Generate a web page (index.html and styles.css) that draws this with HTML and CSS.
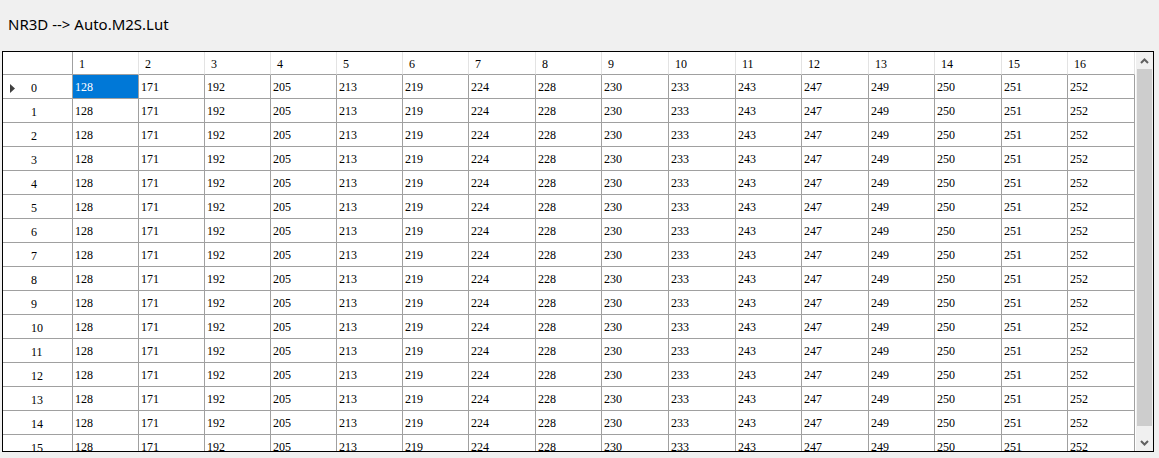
FILE: index.html
```html
<!DOCTYPE html>
<html>
<head>
<meta charset="utf-8">
<title>NR3D --> Auto.M2S.Lut</title>
<link rel="stylesheet" href="styles.css">
</head>
<body>
<div class="title">NR3D --&gt; Auto.M2S.Lut</div>
<div class="grid">
  <div class="viewport">
    <div class="row head">
      <div class="corner"></div>
      <div class="ch">1</div><div class="ch">2</div><div class="ch">3</div><div class="ch">4</div><div class="ch">5</div><div class="ch">6</div><div class="ch">7</div><div class="ch">8</div><div class="ch">9</div><div class="ch">10</div><div class="ch">11</div><div class="ch">12</div><div class="ch">13</div><div class="ch">14</div><div class="ch">15</div><div class="ch">16</div>
    </div>
    <div class="row">
      <div class="rh"><span class="glyph"><svg width="5" height="9" viewBox="0 0 5 9"><polygon points="0,0 5,4.5 0,9" fill="#404040"/></svg></span><span>0</span></div>
      <div class="c sel">128</div><div class="c">171</div><div class="c">192</div><div class="c">205</div><div class="c">213</div><div class="c">219</div><div class="c">224</div><div class="c">228</div><div class="c">230</div><div class="c">233</div><div class="c">243</div><div class="c">247</div><div class="c">249</div><div class="c">250</div><div class="c">251</div><div class="c">252</div>
    </div>
    <div class="row">
      <div class="rh"><span class="glyph"></span><span>1</span></div>
      <div class="c">128</div><div class="c">171</div><div class="c">192</div><div class="c">205</div><div class="c">213</div><div class="c">219</div><div class="c">224</div><div class="c">228</div><div class="c">230</div><div class="c">233</div><div class="c">243</div><div class="c">247</div><div class="c">249</div><div class="c">250</div><div class="c">251</div><div class="c">252</div>
    </div>
    <div class="row">
      <div class="rh"><span class="glyph"></span><span>2</span></div>
      <div class="c">128</div><div class="c">171</div><div class="c">192</div><div class="c">205</div><div class="c">213</div><div class="c">219</div><div class="c">224</div><div class="c">228</div><div class="c">230</div><div class="c">233</div><div class="c">243</div><div class="c">247</div><div class="c">249</div><div class="c">250</div><div class="c">251</div><div class="c">252</div>
    </div>
    <div class="row">
      <div class="rh"><span class="glyph"></span><span>3</span></div>
      <div class="c">128</div><div class="c">171</div><div class="c">192</div><div class="c">205</div><div class="c">213</div><div class="c">219</div><div class="c">224</div><div class="c">228</div><div class="c">230</div><div class="c">233</div><div class="c">243</div><div class="c">247</div><div class="c">249</div><div class="c">250</div><div class="c">251</div><div class="c">252</div>
    </div>
    <div class="row">
      <div class="rh"><span class="glyph"></span><span>4</span></div>
      <div class="c">128</div><div class="c">171</div><div class="c">192</div><div class="c">205</div><div class="c">213</div><div class="c">219</div><div class="c">224</div><div class="c">228</div><div class="c">230</div><div class="c">233</div><div class="c">243</div><div class="c">247</div><div class="c">249</div><div class="c">250</div><div class="c">251</div><div class="c">252</div>
    </div>
    <div class="row">
      <div class="rh"><span class="glyph"></span><span>5</span></div>
      <div class="c">128</div><div class="c">171</div><div class="c">192</div><div class="c">205</div><div class="c">213</div><div class="c">219</div><div class="c">224</div><div class="c">228</div><div class="c">230</div><div class="c">233</div><div class="c">243</div><div class="c">247</div><div class="c">249</div><div class="c">250</div><div class="c">251</div><div class="c">252</div>
    </div>
    <div class="row">
      <div class="rh"><span class="glyph"></span><span>6</span></div>
      <div class="c">128</div><div class="c">171</div><div class="c">192</div><div class="c">205</div><div class="c">213</div><div class="c">219</div><div class="c">224</div><div class="c">228</div><div class="c">230</div><div class="c">233</div><div class="c">243</div><div class="c">247</div><div class="c">249</div><div class="c">250</div><div class="c">251</div><div class="c">252</div>
    </div>
    <div class="row">
      <div class="rh"><span class="glyph"></span><span>7</span></div>
      <div class="c">128</div><div class="c">171</div><div class="c">192</div><div class="c">205</div><div class="c">213</div><div class="c">219</div><div class="c">224</div><div class="c">228</div><div class="c">230</div><div class="c">233</div><div class="c">243</div><div class="c">247</div><div class="c">249</div><div class="c">250</div><div class="c">251</div><div class="c">252</div>
    </div>
    <div class="row">
      <div class="rh"><span class="glyph"></span><span>8</span></div>
      <div class="c">128</div><div class="c">171</div><div class="c">192</div><div class="c">205</div><div class="c">213</div><div class="c">219</div><div class="c">224</div><div class="c">228</div><div class="c">230</div><div class="c">233</div><div class="c">243</div><div class="c">247</div><div class="c">249</div><div class="c">250</div><div class="c">251</div><div class="c">252</div>
    </div>
    <div class="row">
      <div class="rh"><span class="glyph"></span><span>9</span></div>
      <div class="c">128</div><div class="c">171</div><div class="c">192</div><div class="c">205</div><div class="c">213</div><div class="c">219</div><div class="c">224</div><div class="c">228</div><div class="c">230</div><div class="c">233</div><div class="c">243</div><div class="c">247</div><div class="c">249</div><div class="c">250</div><div class="c">251</div><div class="c">252</div>
    </div>
    <div class="row">
      <div class="rh"><span class="glyph"></span><span>10</span></div>
      <div class="c">128</div><div class="c">171</div><div class="c">192</div><div class="c">205</div><div class="c">213</div><div class="c">219</div><div class="c">224</div><div class="c">228</div><div class="c">230</div><div class="c">233</div><div class="c">243</div><div class="c">247</div><div class="c">249</div><div class="c">250</div><div class="c">251</div><div class="c">252</div>
    </div>
    <div class="row">
      <div class="rh"><span class="glyph"></span><span>11</span></div>
      <div class="c">128</div><div class="c">171</div><div class="c">192</div><div class="c">205</div><div class="c">213</div><div class="c">219</div><div class="c">224</div><div class="c">228</div><div class="c">230</div><div class="c">233</div><div class="c">243</div><div class="c">247</div><div class="c">249</div><div class="c">250</div><div class="c">251</div><div class="c">252</div>
    </div>
    <div class="row">
      <div class="rh"><span class="glyph"></span><span>12</span></div>
      <div class="c">128</div><div class="c">171</div><div class="c">192</div><div class="c">205</div><div class="c">213</div><div class="c">219</div><div class="c">224</div><div class="c">228</div><div class="c">230</div><div class="c">233</div><div class="c">243</div><div class="c">247</div><div class="c">249</div><div class="c">250</div><div class="c">251</div><div class="c">252</div>
    </div>
    <div class="row">
      <div class="rh"><span class="glyph"></span><span>13</span></div>
      <div class="c">128</div><div class="c">171</div><div class="c">192</div><div class="c">205</div><div class="c">213</div><div class="c">219</div><div class="c">224</div><div class="c">228</div><div class="c">230</div><div class="c">233</div><div class="c">243</div><div class="c">247</div><div class="c">249</div><div class="c">250</div><div class="c">251</div><div class="c">252</div>
    </div>
    <div class="row">
      <div class="rh"><span class="glyph"></span><span>14</span></div>
      <div class="c">128</div><div class="c">171</div><div class="c">192</div><div class="c">205</div><div class="c">213</div><div class="c">219</div><div class="c">224</div><div class="c">228</div><div class="c">230</div><div class="c">233</div><div class="c">243</div><div class="c">247</div><div class="c">249</div><div class="c">250</div><div class="c">251</div><div class="c">252</div>
    </div>
    <div class="row">
      <div class="rh"><span class="glyph"></span><span>15</span></div>
      <div class="c">128</div><div class="c">171</div><div class="c">192</div><div class="c">205</div><div class="c">213</div><div class="c">219</div><div class="c">224</div><div class="c">228</div><div class="c">230</div><div class="c">233</div><div class="c">243</div><div class="c">247</div><div class="c">249</div><div class="c">250</div><div class="c">251</div><div class="c">252</div>
    </div>
  </div>
  <div class="vscroll">
    <div class="sbtn"><svg width="9" height="6" viewBox="0 0 9 6"><polyline points="1,5 4.5,1.5 8,5" fill="none" stroke="#606060" stroke-width="2"/></svg></div>
    <div class="track"><div class="thumb"></div></div>
    <div class="sbtn"><svg width="9" height="6" viewBox="0 0 9 6"><polyline points="1,1 4.5,4.5 8,1" fill="none" stroke="#606060" stroke-width="2"/></svg></div>
  </div>
</div>
</body>
</html>
```

FILE: styles.css
```css
html, body {
  margin: 0;
  padding: 0;
  background: #f0f0f0;
}

body {
  width: 1159px;
  height: 458px;
  overflow: hidden;
}

.title {
  height: 51px;
  box-sizing: border-box;
  padding: 14px 0 0 8px;
  font-family: "Noto Sans", "Open Sans", sans-serif;
  font-size: 15px;
  line-height: 20px;
  color: #000;
}

.grid {
  margin-left: 2px;
  width: 1152px;
  height: 401px;
  box-sizing: border-box;
  border: 1px solid #000;
  background: #fff;
  display: flex;
}

.viewport {
  flex: 1;
  overflow: hidden;
  font-family: "Liberation Serif", "Times New Roman", serif;
  font-size: 12px;
  color: #000;
}

.row {
  display: grid;
  grid-template-columns: 70px 66px 66px 66px 66px 66px 66px 67px 66px 67px 67px 66px 67px 66px 67px 66px 67px;
  height: 24px;
}

.row.head {
  height: 23px;
}

.row > div {
  box-sizing: border-box;
  border-right: 1px solid #a0a0a0;
  border-bottom: 1px solid #a0a0a0;
  white-space: nowrap;
  overflow: hidden;
}

.corner {
  background: #fff;
}

.row > .ch {
  border-right-color: #e3e3e3;
  padding: 2px 0 0 6px;
  line-height: 20px;
}

.c {
  padding: 1px 0 0 2px;
  line-height: 22px;
}

.c.sel {
  background: #0078d7;
  color: #fff;
}

.row > .rh {
  border-right: 1px solid #a0a0a0;
  display: flex;
  align-items: center;
  padding: 3px 0 0 7px;
  line-height: 20px;
}

.glyph {
  width: 21px;
  height: 9px;
  display: flex;
  align-items: center;
}

.glyph svg {
  display: block;
}

.vscroll {
  width: 17px;
  flex: none;
  background: #f0f0f0;
  display: flex;
  flex-direction: column;
}

.sbtn {
  height: 17px;
  flex: none;
  display: flex;
  align-items: center;
  justify-content: center;
}

.sbtn svg {
  display: block;
}

.track {
  flex: 1;
  padding: 0 1px 8px 1px;
  display: flex;
}

.thumb {
  flex: 1;
  background: #cdcdcd;
}
```
